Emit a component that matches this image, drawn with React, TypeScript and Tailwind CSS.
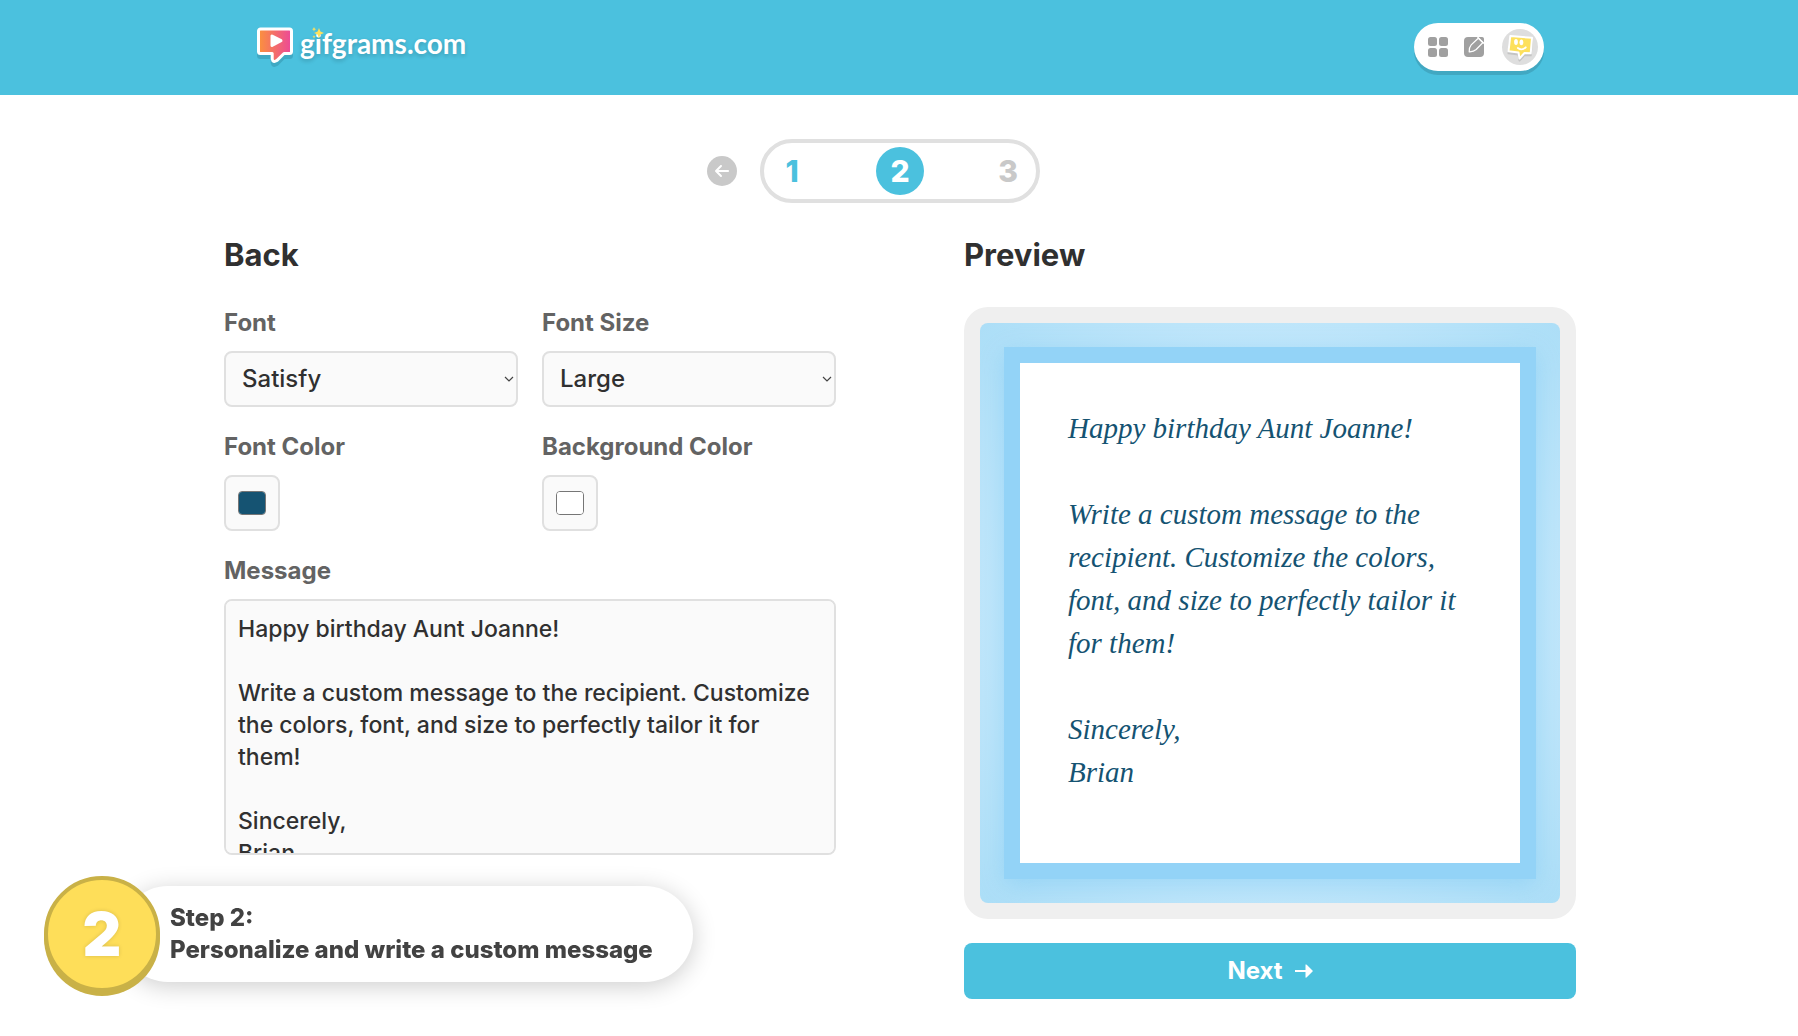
import { useState } from "react";
import { FaArrowLeft } from "react-icons/fa6";

const DEFAULT_MESSAGE = `Happy birthday Aunt Joanne!

Write a custom message to the recipient. Customize the colors, font, and size to perfectly tailor it for them!

Sincerely,
Brian`;

const BUBBLE =
  "M4.500 4H33.500A2 2 0 0 1 35.500 6V26.500A2 2 0 0 1 33.500 28.500H28L20.800 35.600Q17 38 16.200 34V28.500H4.500A2 2 0 0 1 2.500 26.500V6A2 2 0 0 1 4.500 4Z";

function LogoMark() {
  return (
    <svg width="40" height="44" viewBox="0 0 40 44" aria-hidden="true">
      <defs>
        <linearGradient id="logo-fill" x1="0" y1="0" x2="1" y2="0">
          <stop offset="0" stopColor="#fb923c" />
          <stop offset="1" stopColor="#ec4899" />
        </linearGradient>
      </defs>
      <path d={BUBBLE} transform="translate(0 4)" fill="#3fa9c4" stroke="#3fa9c4" strokeWidth="3" strokeLinejoin="round" />
      <path d={BUBBLE} fill="url(#logo-fill)" stroke="#fff" strokeWidth="3" strokeLinejoin="round" />
      <path d="M16 11V20.500L25 15.700Z" fill="#fff" stroke="#fff" strokeWidth="3" strokeLinejoin="round" />
    </svg>
  );
}

function Sparkles() {
  return (
    <svg width="12" height="12" viewBox="0 0 12 12" aria-hidden="true" className="absolute left-3 top-0">
      <g fill="#fde05c">
        <path d="M7 1L8.400 4.600L12 6L8.400 7.400L7 11L5.600 7.400L2 6L5.600 4.600Z" />
        <path d="M2 0L2.700 1.600L4.200 2.200L2.700 2.800L2 4.400L1.300 2.800L0 2.200L1.300 1.600Z" />
        <path d="M2 8L2.500 9.200L3.600 9.700L2.500 10.200L2 11.400L1.500 10.200L0.400 9.700L1.500 9.200Z" />
      </g>
    </svg>
  );
}

function GridIcon() {
  return (
    <svg width="20" height="20" viewBox="0 0 20 20" fill="#a0a0a0" aria-hidden="true">
      <rect width="9" height="9" rx="2.500" />
      <rect x="11" width="9" height="9" rx="2.500" />
      <rect y="11" width="9" height="9" rx="2.500" />
      <rect x="11" y="11" width="9" height="9" rx="2.500" />
    </svg>
  );
}

function EditIcon() {
  return (
    <svg width="20" height="20" viewBox="0 0 20 20" aria-hidden="true">
      <rect width="20" height="20" rx="4" fill="#a0a0a0" />
      <path
        d="M5.200 14.800Q4.900 10.500 7.200 7.800L14.300 1.200L18.800 5.700L12.200 12.500Q9.500 15 5.200 14.800Z"
        fill="#a0a0a0"
        stroke="#fff"
        strokeWidth="1.200"
      />
      <path d="M13.500 0L20 6.500" stroke="#fff" strokeWidth="1.300" />
      <path d="M15.500 0H18A2 2 0 0 1 20 2V4.500Z" fill="#a0a0a0" />
    </svg>
  );
}

function Avatar() {
  return (
    <svg width="36" height="36" viewBox="0 0 36 36" aria-hidden="true">
      <circle cx="18" cy="18" r="18" fill="#dedede" />
      <path
        d="M8.300 7L30 8.800L28.700 24.300L22.500 24L17.500 29.500L16.500 23.500L6.500 22.300Z"
        transform="translate(0 2)"
        fill="#c4c4c4"
        stroke="#c4c4c4"
        strokeWidth="2"
        strokeLinejoin="round"
      />
      <path
        d="M8.300 7L30 8.800L28.700 24.300L22.500 24L17.500 29.500L16.500 23.500L6.500 22.300Z"
        fill="#fde05c"
        stroke="#fff"
        strokeWidth="2"
        strokeLinejoin="round"
      />
      <ellipse cx="14" cy="13" rx="1.900" ry="2.900" fill="#fff" />
      <ellipse cx="19.400" cy="13.300" rx="1.900" ry="2.900" fill="#fff" />
      <path d="M15.800 19Q20 22 23.800 18.300" fill="none" stroke="#fff" strokeWidth="1.800" strokeLinecap="round" />
    </svg>
  );
}

function NextArrow() {
  return (
    <svg width="18" height="14" viewBox="0 0 18 14" aria-hidden="true">
      <path d="M0 7H12" stroke="#fff" strokeWidth="2" />
      <path d="M10.500 0.500Q11.500 0 12.500 1.500L18 7L12.500 12.500Q11.500 14 10.500 13.500Z" fill="#fff" />
    </svg>
  );
}

type SelectFieldProps = {
  id: string;
  label: string;
  options: string[];
};

function SelectField({ id, label, options }: SelectFieldProps) {
  return (
    <div>
      <label htmlFor={id} className="block text-2xl font-bold text-[#636363]">
        {label}
      </label>
      <div className="relative mt-3">
        <select
          id={id}
          className="block w-full h-14 pl-4 pr-6 appearance-none rounded-lg border-2 border-[#e0e0e0] bg-[#fafafa] text-2xl font-medium text-[#303030]"
        >
          {options.map((option) => (
            <option key={option}>{option}</option>
          ))}
        </select>
        <svg
          width="10"
          height="6"
          viewBox="0 0 10 6"
          aria-hidden="true"
          className="absolute right-1 top-1/2 -translate-y-1/2 pointer-events-none"
        >
          <path d="M1 1L5 5L9 1" fill="none" stroke="#444" strokeWidth="1.200" />
        </svg>
      </div>
    </div>
  );
}

type ColorFieldProps = {
  id: string;
  label: string;
  value: string;
  onChange: (value: string) => void;
};

function ColorField({ id, label, value, onChange }: ColorFieldProps) {
  return (
    <div>
      <label htmlFor={id} className="block text-2xl font-bold text-[#636363]">
        {label}
      </label>
      <div className="mt-3 flex h-14 w-14 items-center justify-center rounded-lg border-2 border-[#e0e0e0] bg-[#fafafa]">
        <input
          id={id}
          type="color"
          value={value}
          onChange={(e) => onChange(e.target.value)}
          className="block h-6 w-7 cursor-pointer appearance-none overflow-hidden rounded border border-[#767676] bg-transparent p-0 [&::-webkit-color-swatch-wrapper]:p-0 [&::-webkit-color-swatch]:border-0 [&::-webkit-color-swatch]:rounded-none"
        />
      </div>
    </div>
  );
}

export default function App() {
  const [message, setMessage] = useState(DEFAULT_MESSAGE);
  const [fontColor, setFontColor] = useState("#155372");
  const [backgroundColor, setBackgroundColor] = useState("#ffffff");

  return (
    <div className="relative min-h-screen overflow-hidden bg-white font-['Inter',sans-serif] text-[#303030]">
      <header className="bg-[#4bc1de] pl-0.5">
        <div className="mx-auto flex h-[95px] max-w-[1352px] items-center justify-between px-8 pb-px">
          <a href="#" className="flex items-center text-white">
            <LogoMark />
            <span className="relative ml-1 pb-2 font-['Lato',sans-serif] text-[28px] leading-8 font-bold [text-shadow:0_2px_4px_rgba(0,0,0,0.2)]">
              gifgrams.com
              <Sparkles />
            </span>
          </a>
          <nav className="flex h-12 items-center gap-4 rounded-full bg-white pl-3.5 pr-1.5 shadow-[0_4px_0_#41a8c2]">
            <a href="#" aria-label="Dashboard">
              <GridIcon />
            </a>
            <a href="#" aria-label="Create">
              <EditIcon />
            </a>
            <button type="button" aria-label="Account" className="ml-0.5 cursor-pointer">
              <Avatar />
            </button>
          </nav>
        </div>
      </header>

      <div className="pl-0.5">
        <main className="mx-auto max-w-[1352px] pt-11">
          <div className="relative mx-auto w-[280px]">
            <button
              type="button"
              aria-label="Previous step"
              className="absolute -left-[53px] top-[17px] flex h-[30px] w-[30px] cursor-pointer items-center justify-center rounded-full bg-[#c9c9c9] text-white"
            >
              <FaArrowLeft size={16} />
            </button>
            <ol className="flex h-16 items-center justify-between rounded-full border-4 border-[#e0e0e0] px-1 text-3xl font-extrabold">
              <li className="flex h-12 w-12 items-center justify-center text-[#4bc1de]">1</li>
              <li className="flex h-12 w-12 items-center justify-center rounded-full bg-[#4bc1de] text-white">2</li>
              <li className="flex h-12 w-12 items-center justify-center text-[#c9c9c9]">3</li>
            </ol>
          </div>

          <div className="mt-8 grid grid-cols-2 gap-32">
            <section>
              <h2 className="text-[31px] leading-10 font-bold">Back</h2>
              <form className="mt-8 flex flex-col gap-6">
                <div className="grid grid-cols-2 gap-6">
                  <SelectField id="font" label="Font" options={["Satisfy", "Inter", "Lato"]} />
                  <SelectField id="font-size" label="Font Size" options={["Large", "Medium", "Small"]} />
                  <ColorField id="font-color" label="Font Color" value={fontColor} onChange={setFontColor} />
                  <ColorField
                    id="background-color"
                    label="Background Color"
                    value={backgroundColor}
                    onChange={setBackgroundColor}
                  />
                </div>
                <div>
                  <label htmlFor="message" className="block text-2xl font-bold text-[#636363]">
                    Message
                  </label>
                  <textarea
                    id="message"
                    value={message}
                    onChange={(e) => setMessage(e.target.value)}
                    className="mt-3 block h-64 w-full resize-none rounded-lg border-2 border-[#e0e0e0] bg-[#fafafa] p-3 text-[23px] leading-8 font-medium [scrollbar-width:none]"
                  />
                </div>
              </form>
            </section>

            <section>
              <h2 className="text-[31px] leading-10 font-bold">Preview</h2>
              <div className="mt-8 rounded-3xl bg-[#efefef] p-4">
                <div className="overflow-hidden rounded-lg bg-[radial-gradient(circle,#c2e7fb_65%,#acdef7_100%)] p-6">
                  <div
                    className="aspect-square border-16 border-[#93d3f7] px-12 pt-11 font-['Satisfy','Liberation_Serif',cursive] text-[29px] leading-[43px] whitespace-pre-wrap italic shadow-[0_6px_24px_rgba(110,195,242,0.45)]"
                    style={{ color: fontColor, backgroundColor }}
                  >
                    {message}
                  </div>
                </div>
              </div>
              <button
                type="button"
                className="mt-6 flex h-14 w-full cursor-pointer items-center justify-center gap-3 rounded-lg bg-[#4bc1de] text-2xl font-bold text-white"
              >
                Next
                <NextArrow />
              </button>
            </section>
          </div>
        </main>
      </div>

      <aside className="absolute bottom-11 left-11 flex items-center">
        <div className="z-10 flex h-[116px] w-[116px] items-center justify-center rounded-full border-4 border-[#c9b147] bg-[#fede59] text-[60px] font-black text-white shadow-[0_4px_0_#c9b147] [text-shadow:0_0_4px_rgba(0,0,0,0.15)]">
          2
        </div>
        <p className="-ml-10 flex h-24 flex-col justify-center rounded-full bg-white pl-[50px] pr-10 text-2xl font-extrabold text-[#424242] shadow-[0_4px_24px_rgba(0,0,0,0.2)]">
          <span>Step 2:</span>
          <span>Personalize and write a custom message</span>
        </p>
      </aside>
    </div>
  );
}
